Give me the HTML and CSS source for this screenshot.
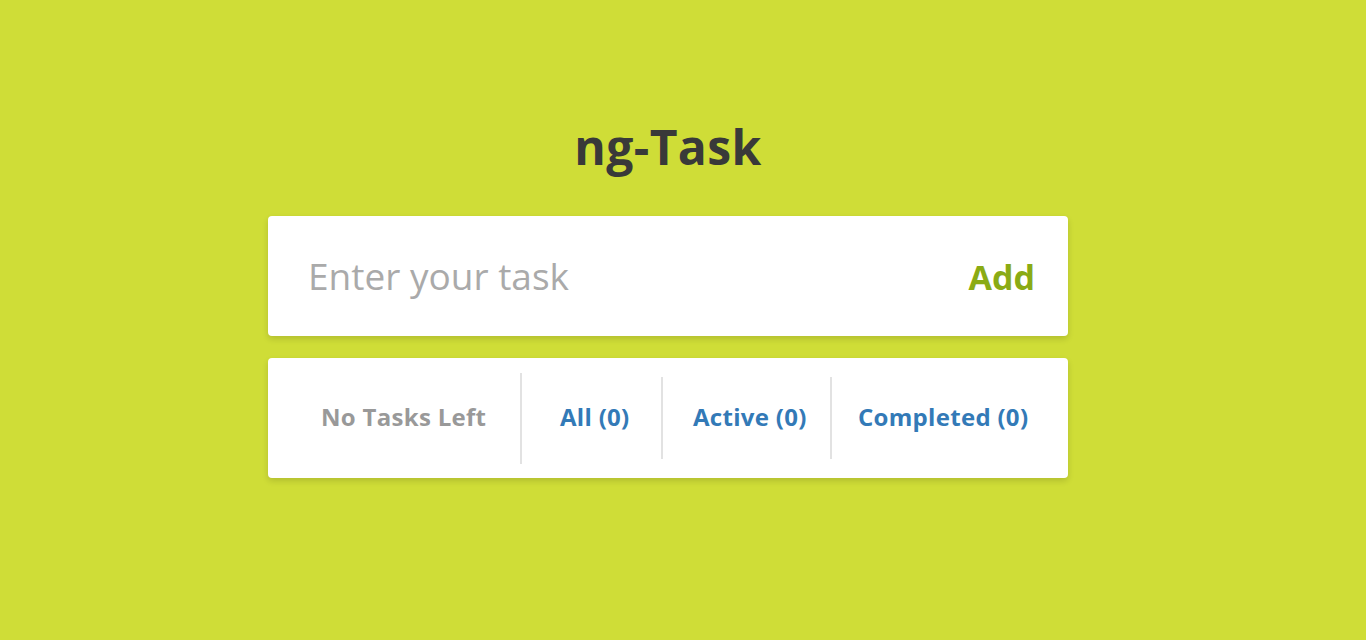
FILE: index.html
```html
<!DOCTYPE html>
<html>
<head>
<meta charset="utf-8">
<link rel="stylesheet" href="styles.css">
</head>
<body>
<div class="page">
  <h1 class="title">ng-Task</h1>
  <div class="card entry">
    <input class="task-input" type="text" placeholder="Enter your task">
    <button class="add-btn">Add</button>
  </div>
  <div class="card tabs">
    <div class="tab tab-left"><span class="left-text">No Tasks Left</span></div>
    <div class="divider divider-tall"></div>
    <div class="tab tab-all"><a class="link">All (0)</a></div>
    <div class="divider"></div>
    <div class="tab tab-active"><a class="link">Active (0)</a></div>
    <div class="divider"></div>
    <div class="tab tab-completed"><a class="link">Completed (0)</a></div>
  </div>
</div>
</body>
</html>
```
FILE: styles.css
```css
html, body {
  margin: 0;
  padding: 0;
  background: #cfdd37;
  height: 100%;
}
body {
  font-family: "Open Sans", "Lato", sans-serif;
}
.page {
  width: 800px;
  margin: 0 auto;
  padding: 118px 30px 0 0;
}
.title {
  margin: 0 0 40px;
  text-align: center;
  font-size: 48px;
  line-height: 58px;
  font-weight: 700;
  color: #393939;
  letter-spacing: 0.4px;
}
.card {
  background: #fff;
  border-radius: 4px;
  box-shadow: 0 3px 6px rgba(0, 0, 0, 0.14);
}
.entry {
  height: 120px;
  display: flex;
  align-items: center;
  padding: 0 33px 0 40px;
  box-sizing: border-box;
  margin-bottom: 22px;
}
.task-input {
  flex: 1;
  border: none;
  outline: none;
  font-family: inherit;
  font-size: 37px;
  color: #444;
  background: transparent;
  padding: 0;
  height: 50px;
  margin-bottom: 2px;
}
.task-input::placeholder {
  color: #aaaaaa;
}
.add-btn {
  border: none;
  background: transparent;
  font-family: inherit;
  font-weight: 700;
  font-size: 34px;
  color: #8aab14;
  padding: 0;
  margin-top: 2px;
}
.tabs {
  height: 120px;
  display: flex;
  align-items: center;
}
.tab {
  display: flex;
  align-items: center;
  height: 100%;
  font-size: 24px;
  font-weight: 700;
  letter-spacing: 0.3px;
}
.tab span, .tab a {
  margin-bottom: 4px;
}
.tab-left { width: 252px; padding-left: 53px; box-sizing: border-box; }
.tab-all { width: 139px; padding-left: 38px; box-sizing: border-box; }
.tab-active { width: 167px; padding-left: 30px; box-sizing: border-box; }
.tab-completed { flex: 1; padding-left: 26px; }
.left-text { color: #999; }
.link { color: #337ab7; }
.divider {
  width: 2px;
  height: 82px;
  background: #e2e2e2;
  align-self: center;
}
.divider-tall {
  height: 91px;
}
```
